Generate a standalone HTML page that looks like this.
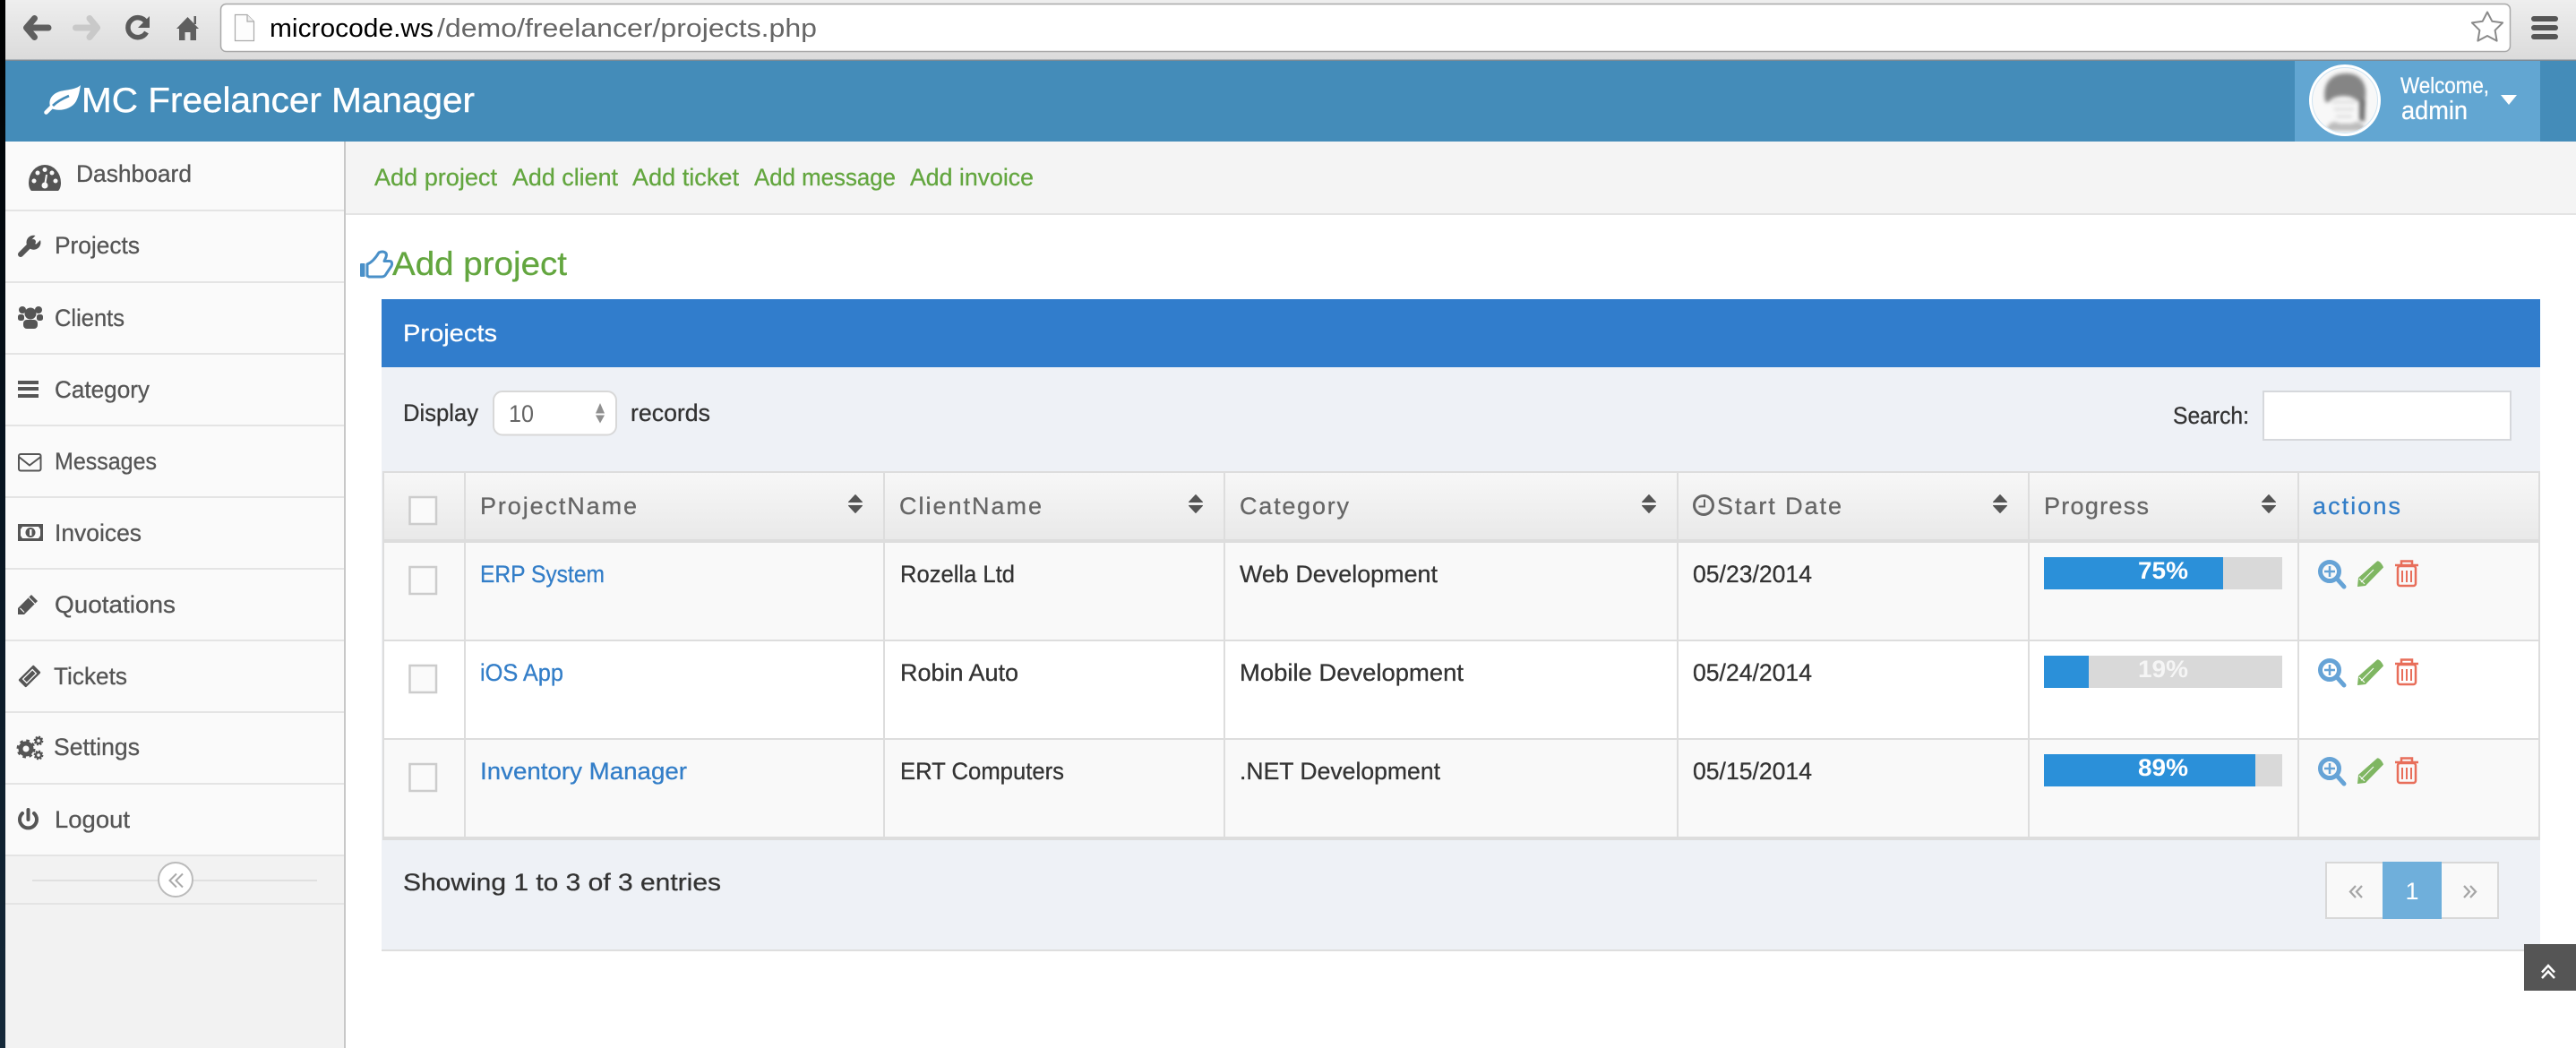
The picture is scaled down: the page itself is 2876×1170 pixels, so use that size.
<!DOCTYPE html>
<html lang="en">
<head>
<meta charset="utf-8">
<title>MC Freelancer Manager</title>
<style>
html,body{margin:0;padding:0;background:#fff;width:2876px;height:1170px;overflow:hidden}
svg{display:block}
text{font-family:"Liberation Sans",Arial,sans-serif;font-size:27px;white-space:pre;stroke-width:.3px}
.side{fill:#555;stroke:#555}
.sub{fill:#63a63f;stroke:#63a63f}
.th{fill:#666;stroke:#666}
.td{fill:#333;stroke:#333}
.lnk{fill:#337ec8;stroke:#337ec8}
.pct{font-weight:700;fill:#fff}
</style>
</head>
<body>
<svg xmlns="http://www.w3.org/2000/svg" width="2876" height="1170" viewBox="0 0 2876 1170">
<defs>
<linearGradient id="tb" x1="0" y1="0" x2="0" y2="1"><stop offset="0" stop-color="#eeeeee"/><stop offset="1" stop-color="#dbdbdb"/></linearGradient>
<linearGradient id="th" x1="0" y1="0" x2="0" y2="1"><stop offset="0" stop-color="#f7f7f7"/><stop offset="1" stop-color="#e9e9e9"/></linearGradient>
<linearGradient id="desk" x1="0" y1="0" x2="0" y2="1"><stop offset="0" stop-color="#000"/><stop offset=".4" stop-color="#06121d"/><stop offset="1" stop-color="#15293a"/></linearGradient>
<filter id="bl" x="-10%" y="-10%" width="120%" height="120%"><feGaussianBlur stdDeviation="2"/></filter>
<clipPath id="av"><circle cx="2618" cy="112" r="36"/></clipPath>
</defs>

<!-- page base -->
<rect width="2876" height="1170" fill="#fff"/>
<rect x="0" y="0" width="6" height="1170" fill="url(#desk)"/>

<!-- browser toolbar -->
<rect x="6" y="0" width="2870" height="67" fill="url(#tb)"/>
<rect x="6" y="66.500" width="2870" height="1.500" fill="#7c8a94"/>
<path d="M54 31H33M38.500 20.500L29.500 31L38.500 41.500" fill="none" stroke="#5f5f5f" stroke-width="7" stroke-linecap="round" stroke-linejoin="round"/>
<path d="M84.500 31H106M100 20.500L108.500 31L100 41.500" fill="none" stroke="#c9c9c9" stroke-width="7" stroke-linecap="round" stroke-linejoin="round"/>
<path d="M163 24.500A11 11 0 1 0 163.500 36" fill="none" stroke="#5a5a5a" stroke-width="5.500"/>
<path d="M167 18V31H154Z" fill="#5a5a5a"/>
<path d="M197 32L209.500 19L222 32H219V45H212.500V36H206.500V45H200V32Z" fill="#5f5f5f"/>
<rect x="216.500" y="18" width="2.500" height="9" fill="#5f5f5f"/>
<rect x="246.500" y="4.500" width="2556" height="53" rx="6" fill="#fff" stroke="#a9a9a9" stroke-width="1.500"/>
<path d="M262.500 16.500H276L283.500 24V45.500H262.500Z" fill="#fdfdfd" stroke="#aaa" stroke-width="1.200"/>
<path d="M276 16.500V24H283.500" fill="#eee" stroke="#aaa" stroke-width="1.200"/>
<text x="301" y="41" style="font-size:29px" fill="#000" textLength="183" lengthAdjust="spacingAndGlyphs">microcode.ws</text>
<text x="488" y="41" style="font-size:29px" fill="#666" textLength="424" lengthAdjust="spacingAndGlyphs">/demo/freelancer/projects.php</text>
<path d="M2777 13.500L2782.300 23.700L2794.100 25.400L2785.600 33.800L2787.600 45.600L2777 40L2766.400 45.600L2768.400 33.800L2759.900 25.400L2771.700 23.700Z" fill="#fff" stroke="#8a8a8a" stroke-width="2" stroke-linejoin="round"/>
<rect x="2826" y="18" width="30" height="6" rx="3" fill="#555"/>
<rect x="2826" y="28" width="30" height="6" rx="3" fill="#555"/>
<rect x="2826" y="38" width="30" height="6" rx="3" fill="#555"/>

<!-- app header -->
<rect x="6" y="68" width="2870" height="90" fill="#448cb9"/>
<path d="M90 95C85 100 75 100 67 102C57 105 53 113 57 121C66 125 80 122 85 113C88 107 89 101 90 95Z" fill="#fff"/>
<path d="M51.500 125.500L59 118" stroke="#fff" stroke-width="4.500" stroke-linecap="round"/>
<path d="M59 118C64 113 70 110 77 107" stroke="#448cb9" stroke-width="2.800" fill="none"/>
<text x="91" y="125" style="font-size:39px;stroke:#fff;stroke-width:.4px" fill="#fff" textLength="439" lengthAdjust="spacingAndGlyphs">MC Freelancer Manager</text>
<rect x="2562" y="68" width="274" height="90" fill="#62a6d2"/>
<circle cx="2618" cy="112" r="40" fill="#fff"/>
<circle cx="2618" cy="112" r="36.500" fill="#f8f8f8" stroke="#cfe3f1" stroke-width="1"/>
<g clip-path="url(#av)"><g filter="url(#bl)">
<path d="M2596 113C2592 92 2604 82 2618 82C2634 81 2643 92 2641 108L2640 116L2631 112C2625 106 2612 106 2604 110C2601 113 2598 116 2596 113Z" fill="#858585"/>
<path d="M2634 110L2641 112L2640 136L2634 134Z" fill="#707070"/>
<path d="M2604 114H2630M2606 122H2628M2608 130H2626" stroke="#cdcdcd" stroke-width="2" fill="none"/>
<path d="M2596 146C2600 136 2606 134 2612 138H2626C2632 134 2638 136 2642 146Z" fill="#bcbcbc"/>
</g></g>
<text x="2680" y="104" style="font-size:25px;stroke:#fff" fill="#fff" textLength="99" lengthAdjust="spacingAndGlyphs">Welcome,</text>
<text x="2681" y="133" style="font-size:29px;stroke:#fff" fill="#fff" textLength="74" lengthAdjust="spacingAndGlyphs">admin</text>
<path d="M2792 106H2810L2801 117Z" fill="#fff"/>

<!-- sidebar -->
<rect x="6" y="158" width="378" height="1012" fill="#f2f2f2"/>
<rect x="6" y="158" width="378" height="796" fill="#fafafa"/>
<g fill="#e4e4e4">
<rect x="6" y="234" width="378" height="2"/><rect x="6" y="314" width="378" height="2"/>
<rect x="6" y="394" width="378" height="2"/><rect x="6" y="474" width="378" height="2"/>
<rect x="6" y="554" width="378" height="2"/><rect x="6" y="634" width="378" height="2"/>
<rect x="6" y="714" width="378" height="2"/><rect x="6" y="794" width="378" height="2"/>
<rect x="6" y="874" width="378" height="2"/><rect x="6" y="954" width="378" height="2"/>
<rect x="6" y="1008" width="378" height="2"/>
</g>
<rect x="384" y="158" width="2" height="1012" fill="#c8c8c8"/>

<text class="side" x="85" y="203" textLength="129" lengthAdjust="spacingAndGlyphs">Dashboard</text>
<text class="side" x="61" y="283" textLength="95" lengthAdjust="spacingAndGlyphs">Projects</text>
<text class="side" x="61" y="364" textLength="78" lengthAdjust="spacingAndGlyphs">Clients</text>
<text class="side" x="61" y="444" textLength="106" lengthAdjust="spacingAndGlyphs">Category</text>
<text class="side" x="61" y="524" textLength="114" lengthAdjust="spacingAndGlyphs">Messages</text>
<text class="side" x="61" y="604" textLength="97" lengthAdjust="spacingAndGlyphs">Invoices</text>
<text class="side" x="61" y="684" textLength="135" lengthAdjust="spacingAndGlyphs">Quotations</text>
<text class="side" x="60" y="764" textLength="82" lengthAdjust="spacingAndGlyphs">Tickets</text>
<text class="side" x="60" y="843" textLength="96" lengthAdjust="spacingAndGlyphs">Settings</text>
<text class="side" x="61" y="924" textLength="84" lengthAdjust="spacingAndGlyphs">Logout</text>

<!-- gauge -->
<path d="M32 204A18 20 0 0 1 68 204C68 208 67 211 65 213H35C33 211 32 208 32 204Z" fill="#555"/>
<g fill="#fafafa"><circle cx="38" cy="202" r="2.500"/><circle cx="42" cy="193" r="2.500"/><circle cx="50" cy="189.500" r="2.500"/><circle cx="58" cy="193" r="2.500"/><circle cx="62" cy="202" r="2.500"/><circle cx="50" cy="207" r="3.500"/></g>
<path d="M50 207L52 195" stroke="#fafafa" stroke-width="2"/>
<!-- wrench -->
<path d="M23 284L37 270" stroke="#555" stroke-width="6" stroke-linecap="round"/>
<path d="M45 268A8 8 0 1 1 39.500 263L35.500 267.500L36.500 271.500L40.500 272.500Z" fill="#555"/>
<!-- group -->
<g fill="#555"><circle cx="34" cy="350" r="6.500"/><rect x="26" y="357" width="16" height="10" rx="4"/><circle cx="25" cy="346" r="4"/><circle cx="43" cy="346" r="4"/><rect x="20" y="351" width="7" height="7" rx="2.500"/><rect x="41" y="351" width="7" height="7" rx="2.500"/></g>
<!-- bars -->
<g fill="#555"><rect x="20" y="425" width="23" height="4"/><rect x="20" y="432" width="23" height="4"/><rect x="20" y="440" width="23" height="4"/></g>
<!-- envelope -->
<rect x="21" y="507" width="24.500" height="18.500" rx="2" fill="none" stroke="#555" stroke-width="2"/>
<path d="M21 510L33 519.500L45.500 510" fill="none" stroke="#555" stroke-width="2"/>
<!-- money -->
<rect x="20" y="585" width="28" height="19" fill="#555"/>
<path d="M25 588H43L45 591V598L43 601H25L23 598V591Z" fill="#fafafa"/>
<circle cx="34" cy="594.500" r="5.500" fill="#555"/>
<rect x="33" y="591" width="2.500" height="7" fill="#fafafa"/>
<!-- pencil -->
<path d="M20 686V679L35 664L42 671L27 686Z" fill="#555"/>
<path d="M32 667L39 674M22.500 679L27 683.500" stroke="#fafafa" stroke-width="1.200"/>
<!-- ticket -->
<g transform="rotate(-45 33 755)"><rect x="21" y="749" width="24" height="12" rx="1.500" fill="#555"/><rect x="25.500" y="752" width="15" height="6" fill="none" stroke="#fafafa" stroke-width="1.300"/></g>
<!-- cogs -->
<g fill="none" stroke="#555">
<circle cx="29" cy="836" r="6" stroke-width="5"/><circle cx="29" cy="836" r="9" stroke-width="3" stroke-dasharray="3.500 3.570"/>
<circle cx="43" cy="827" r="3" stroke-width="2.500"/><circle cx="43" cy="827" r="4.500" stroke-width="1.800" stroke-dasharray="2 1.530"/>
<circle cx="43" cy="843" r="3" stroke-width="2.500"/><circle cx="43" cy="843" r="4.500" stroke-width="1.800" stroke-dasharray="2 1.530"/>
</g>
<!-- power -->
<path d="M25 908A9.500 9.500 0 1 0 38 908" fill="none" stroke="#555" stroke-width="4" stroke-linecap="round"/>
<path d="M31.500 904V915" stroke="#555" stroke-width="4" stroke-linecap="round"/>
<!-- collapse -->
<rect x="36" y="982" width="318" height="2" fill="#e0e0e0"/>
<circle cx="196" cy="982" r="19" fill="#fff" stroke="#bbb" stroke-width="2"/>
<path d="M197 975.500L189.500 983L197 990.500M204 975.500L196.500 983L204 990.500" fill="none" stroke="#aaa" stroke-width="2"/>

<!-- sub navigation -->
<rect x="386" y="158" width="2490" height="80" fill="#f4f4f4"/>
<rect x="386" y="238" width="2490" height="2" fill="#e4e4e4"/>
<text class="sub" x="418" y="207" textLength="137" lengthAdjust="spacingAndGlyphs">Add project</text>
<text class="sub" x="572" y="207" textLength="118" lengthAdjust="spacingAndGlyphs">Add client</text>
<text class="sub" x="706" y="207" textLength="119" lengthAdjust="spacingAndGlyphs">Add ticket</text>
<text class="sub" x="842" y="207" textLength="158" lengthAdjust="spacingAndGlyphs">Add message</text>
<text class="sub" x="1016" y="207" textLength="138" lengthAdjust="spacingAndGlyphs">Add invoice</text>

<!-- heading -->
<rect x="402" y="294" width="5.500" height="15" rx="1" fill="#4a90c8"/>
<path d="M410 295C415 293 420 287 423 282C427 280 433 281 431 287L429 291.500H435C438 291.500 438 295 437 297L431 306C430 308 428 309 426 309H412L410 308Z" fill="none" stroke="#4a90c8" stroke-width="3" stroke-linejoin="round"/>
<text x="438" y="307" style="font-size:37.500px;stroke:#63a63f" fill="#63a63f" textLength="195" lengthAdjust="spacingAndGlyphs">Add project</text>

<!-- panel -->
<rect x="426" y="334" width="2410" height="76" fill="#317dcc"/>
<text x="450" y="381" fill="#fff" style="stroke:#fff" textLength="105" lengthAdjust="spacingAndGlyphs">Projects</text>
<rect x="426" y="410" width="2410" height="650" fill="#eef1f6"/>
<rect x="426" y="1060" width="2410" height="2" fill="#dedede"/>

<text class="td" x="450" y="470" textLength="84" lengthAdjust="spacingAndGlyphs">Display</text>
<rect x="551" y="437" width="137" height="48.500" rx="10" fill="#fff" stroke="#d8d8d8" stroke-width="2"/>
<text x="568" y="471" fill="#666" textLength="28" lengthAdjust="spacingAndGlyphs">10</text>
<path d="M665 461.500L670 450L675 461.500ZM665 463.500L670 472.500L675 463.500Z" fill="#8f8f8f"/>
<text class="td" x="704" y="470" textLength="89" lengthAdjust="spacingAndGlyphs">records</text>
<text class="td" x="2426" y="473" textLength="85" lengthAdjust="spacingAndGlyphs">Search:</text>
<rect x="2527" y="437" width="276" height="54" fill="#fff" stroke="#d6d8dc" stroke-width="2"/>

<!-- table -->
<rect x="427" y="526" width="2409" height="412" fill="#ddd"/>
<rect x="429" y="528" width="2405" height="74" fill="url(#th)"/>
<rect x="429" y="606" width="2405" height="108" fill="#f9f9f9"/>
<rect x="429" y="716" width="2405" height="108" fill="#fff"/>
<rect x="429" y="826" width="2405" height="108" fill="#f9f9f9"/>
<g fill="#ddd">
<rect x="518" y="526" width="2" height="412"/><rect x="986" y="526" width="2" height="412"/>
<rect x="1366" y="526" width="2" height="412"/><rect x="1872" y="526" width="2" height="412"/>
<rect x="2264" y="526" width="2" height="412"/><rect x="2565" y="526" width="2" height="412"/>
</g>

<g fill="#fafafa" stroke="#ccc" stroke-width="2.500">
<rect x="457.500" y="555" width="29.500" height="30"/>
<rect x="457.500" y="633" width="29.500" height="30"/>
<rect x="457.500" y="743" width="29.500" height="30"/>
<rect x="457.500" y="853" width="29.500" height="30"/>
</g>

<text class="th" x="536" y="574" textLength="175" lengthAdjust="spacing">ProjectName</text>
<text class="th" x="1004" y="574" textLength="159" lengthAdjust="spacing">ClientName</text>
<text class="th" x="1384" y="574" textLength="122" lengthAdjust="spacing">Category</text>
<circle cx="1902" cy="564" r="10.500" fill="none" stroke="#666" stroke-width="3"/>
<path d="M1903 557.500V565.500H1896.500" fill="none" stroke="#666" stroke-width="2"/>
<text class="th" x="1917" y="574" textLength="139" lengthAdjust="spacing">Start Date</text>
<text class="th" x="2282" y="574" textLength="117" lengthAdjust="spacing">Progress</text>
<text x="2582" y="574" fill="#337ec8" style="stroke:#337ec8" textLength="98" lengthAdjust="spacing">actions</text>

<g fill="#555" stroke="#555" stroke-width="1" stroke-linejoin="round">
<path d="M947.500 560.500L955 552.500L962.500 560.500ZM947.500 564.500L955 572.500L962.500 564.500Z"/>
<path d="M1327.500 560.500L1335 552.500L1342.500 560.500ZM1327.500 564.500L1335 572.500L1342.500 564.500Z"/>
<path d="M1833.500 560.500L1841 552.500L1848.500 560.500ZM1833.500 564.500L1841 572.500L1848.500 564.500Z"/>
<path d="M2225.500 560.500L2233 552.500L2240.500 560.500ZM2225.500 564.500L2233 572.500L2240.500 564.500Z"/>
<path d="M2525.500 560.500L2533 552.500L2540.500 560.500ZM2525.500 564.500L2533 572.500L2540.500 564.500Z"/>
</g>

<text class="lnk" x="536" y="650" textLength="139" lengthAdjust="spacingAndGlyphs">ERP System</text>
<text class="td" x="1005" y="650" textLength="128" lengthAdjust="spacingAndGlyphs">Rozella Ltd</text>
<text class="td" x="1384" y="650" textLength="221" lengthAdjust="spacingAndGlyphs">Web Development</text>
<text class="td" x="1890" y="650" textLength="133" lengthAdjust="spacingAndGlyphs">05/23/2014</text>

<text class="lnk" x="536" y="760" textLength="93" lengthAdjust="spacingAndGlyphs">iOS App</text>
<text class="td" x="1005" y="760" textLength="132" lengthAdjust="spacingAndGlyphs">Robin Auto</text>
<text class="td" x="1384" y="760" textLength="250" lengthAdjust="spacingAndGlyphs">Mobile Development</text>
<text class="td" x="1890" y="760" textLength="133" lengthAdjust="spacingAndGlyphs">05/24/2014</text>

<text class="lnk" x="536" y="870" textLength="231" lengthAdjust="spacingAndGlyphs">Inventory Manager</text>
<text class="td" x="1005" y="870" textLength="183" lengthAdjust="spacingAndGlyphs">ERT Computers</text>
<text class="td" x="1384" y="870" textLength="224" lengthAdjust="spacingAndGlyphs">.NET Development</text>
<text class="td" x="1890" y="870" textLength="133" lengthAdjust="spacingAndGlyphs">05/15/2014</text>

<!-- progress -->
<rect x="2282" y="622" width="266" height="36" fill="#d9d9d9"/><rect x="2282" y="622" width="200" height="36" fill="#2b90d9"/>
<text class="pct" x="2387" y="646" textLength="56" lengthAdjust="spacingAndGlyphs">75%</text>
<rect x="2282" y="732" width="266" height="36" fill="#d9d9d9"/><rect x="2282" y="732" width="50" height="36" fill="#2b90d9"/>
<text class="pct" x="2387" y="756" style="fill:#f5f5f5" textLength="56" lengthAdjust="spacingAndGlyphs">19%</text>
<rect x="2282" y="842" width="266" height="36" fill="#d9d9d9"/><rect x="2282" y="842" width="236" height="36" fill="#2b90d9"/>
<text class="pct" x="2387" y="866" textLength="56" lengthAdjust="spacingAndGlyphs">89%</text>

<!-- action icons row 1 -->
<g>
<circle cx="2601" cy="638" r="10.500" fill="none" stroke="#66a3d6" stroke-width="5"/>
<path d="M2609 646L2617 655" stroke="#66a3d6" stroke-width="5" stroke-linecap="round"/>
<path d="M2595 638H2607M2601 632V644" stroke="#66a3d6" stroke-width="2.500"/>
<path d="M2632 655L2633 645L2654 626.500C2656 625.500 2660 630 2661 633.500L2641 654Z" fill="#7fb662"/>
<path d="M2634 646L2640 652M2636 650L2650 636" stroke="#f9f9f9" stroke-width="1.200"/>
<path d="M2674 631H2700M2681 630V626.500H2693V630" fill="none" stroke="#e86e5a" stroke-width="2.500"/>
<rect x="2677" y="632" width="20" height="22" rx="2.500" fill="none" stroke="#e86e5a" stroke-width="2.500"/>
<path d="M2682 637V650M2687 637V650M2692 637V650" stroke="#e86e5a" stroke-width="2"/>
</g>
<!-- action icons row 2 -->
<g transform="translate(0 110)">
<circle cx="2601" cy="638" r="10.500" fill="none" stroke="#66a3d6" stroke-width="5"/>
<path d="M2609 646L2617 655" stroke="#66a3d6" stroke-width="5" stroke-linecap="round"/>
<path d="M2595 638H2607M2601 632V644" stroke="#66a3d6" stroke-width="2.500"/>
<path d="M2632 655L2633 645L2654 626.500C2656 625.500 2660 630 2661 633.500L2641 654Z" fill="#7fb662"/>
<path d="M2634 646L2640 652M2636 650L2650 636" stroke="#fff" stroke-width="1.200"/>
<path d="M2674 631H2700M2681 630V626.500H2693V630" fill="none" stroke="#e86e5a" stroke-width="2.500"/>
<rect x="2677" y="632" width="20" height="22" rx="2.500" fill="none" stroke="#e86e5a" stroke-width="2.500"/>
<path d="M2682 637V650M2687 637V650M2692 637V650" stroke="#e86e5a" stroke-width="2"/>
</g>
<!-- action icons row 3 -->
<g transform="translate(0 220)">
<circle cx="2601" cy="638" r="10.500" fill="none" stroke="#66a3d6" stroke-width="5"/>
<path d="M2609 646L2617 655" stroke="#66a3d6" stroke-width="5" stroke-linecap="round"/>
<path d="M2595 638H2607M2601 632V644" stroke="#66a3d6" stroke-width="2.500"/>
<path d="M2632 655L2633 645L2654 626.500C2656 625.500 2660 630 2661 633.500L2641 654Z" fill="#7fb662"/>
<path d="M2634 646L2640 652M2636 650L2650 636" stroke="#f9f9f9" stroke-width="1.200"/>
<path d="M2674 631H2700M2681 630V626.500H2693V630" fill="none" stroke="#e86e5a" stroke-width="2.500"/>
<rect x="2677" y="632" width="20" height="22" rx="2.500" fill="none" stroke="#e86e5a" stroke-width="2.500"/>
<path d="M2682 637V650M2687 637V650M2692 637V650" stroke="#e86e5a" stroke-width="2"/>
</g>

<!-- table footer -->
<text class="td" x="450" y="994" textLength="355" lengthAdjust="spacingAndGlyphs">Showing 1 to 3 of 3 entries</text>
<rect x="2597" y="963" width="192" height="62" fill="#f9f9f9" stroke="#d8d8d8" stroke-width="2"/>
<rect x="2660" y="962" width="66" height="64" fill="#6fafdb"/>
<text x="2693" y="1004" fill="#fff" text-anchor="middle">1</text>
<path d="M2630 989L2624 995.500L2630 1002M2637 989L2631 995.500L2637 1002" fill="none" stroke="#a6a6a6" stroke-width="2.300"/>
<path d="M2751 989L2757 995.500L2751 1002M2758 989L2764 995.500L2758 1002" fill="none" stroke="#a6a6a6" stroke-width="2.300"/>

<!-- scroll to top -->
<rect x="2818" y="1054" width="58" height="52" fill="#555"/>
<path d="M2838 1085.500L2845 1078L2852 1085.500M2838 1092L2845 1084.500L2852 1092" fill="none" stroke="#fff" stroke-width="2.500"/>
</svg>
</body>
</html>
